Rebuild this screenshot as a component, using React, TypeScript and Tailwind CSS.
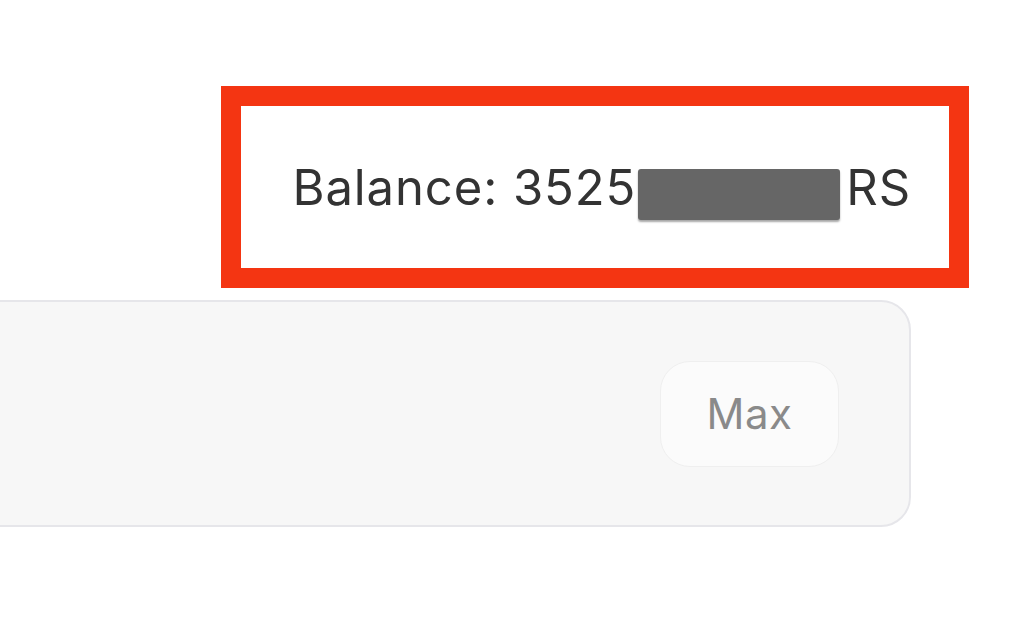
export default function App() {
  return (
    <div
      className="w-[1023px] h-[625px] bg-white overflow-hidden"
      style={{ fontFamily: 'Inter, "Noto Sans", sans-serif' }}
    >
      <div className="flex justify-end pt-[86px] pr-[54px]">
        {/* Balance callout */}
        <div className="w-[748px] h-[202px] border-[20px] border-[#f43512] flex items-center justify-end pr-[38px]">
          <div className="flex items-center whitespace-nowrap text-[49px] leading-none text-[#333333] tracking-[0.9px]">
            <span>Balance: 3525</span>
            <span className="inline-block shrink-0 w-[202px] h-[51px] mt-[14px] ml-[2px] mr-[6px] bg-[#666666] rounded-[3px] shadow-[0_2px_2px_rgba(0,0,0,0.35)]" />
            <span>RS</span>
          </div>
        </div>
      </div>

      {/* Amount input */}
      <div className="flex justify-end pr-[112px] mt-[12px]">
        <div className="w-[960px] h-[227px] -ml-[60px] rounded-[30px] border-2 border-[#e6e6ea] bg-[#f7f7f7] flex items-center justify-end pr-[70px]">
          <button className="w-[179px] h-[106px] rounded-[30px] bg-[#fbfbfb] border border-[#efefef] text-[42px] tracking-[0.5px] text-[#8a8a8a]">
            Max
          </button>
        </div>
      </div>
    </div>
  )
}
